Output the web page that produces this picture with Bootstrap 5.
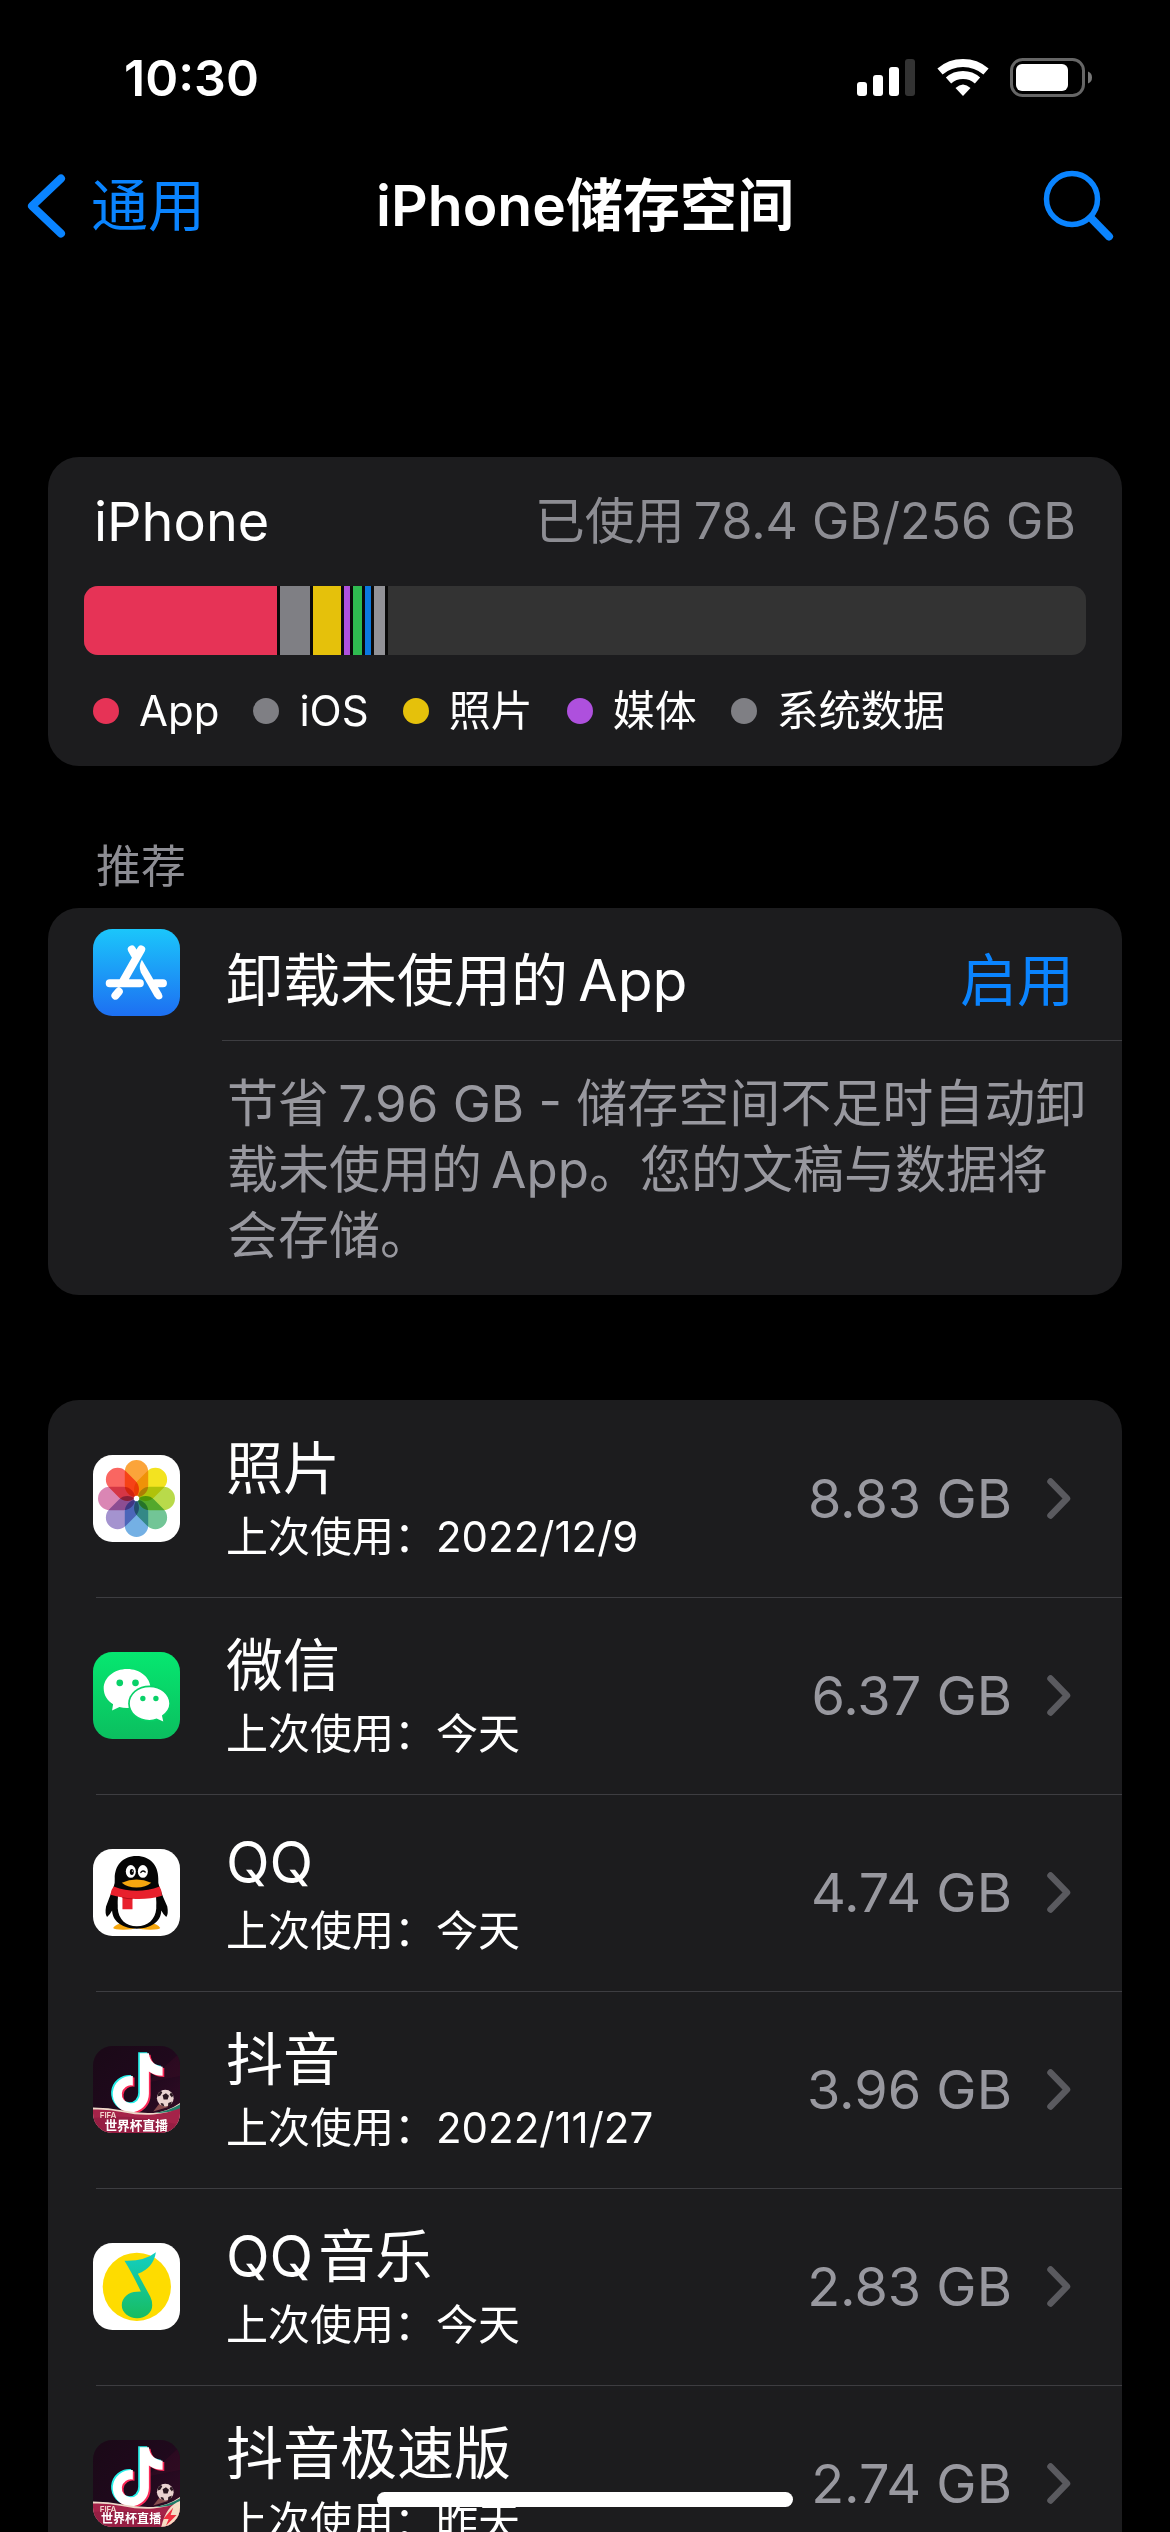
<!DOCTYPE html>
<html lang="zh-CN" data-bs-theme="dark">
<head>
<meta charset="utf-8">
<meta name="viewport" content="width=device-width, initial-scale=1">
<title>iPhone储存空间</title>
<link href="https://cdn.jsdelivr.net/npm/bootstrap@5.3.0/dist/css/bootstrap.min.css" rel="stylesheet">
<style>
  body { background: #000; color: #fff; font-family: Inter, "Noto Sans CJK SC", sans-serif; height: 100vh; overflow: hidden; }
  svg { display: block; flex: none; }
  a { color: inherit; text-decoration: none; }
  .txt-lg { font-size: 57px; line-height: 76px; }
  .txt-num { font-size: 54px; line-height: 76px; }
  .txt-md { font-size: 51px; line-height: 66px; }
  .txt-sm { font-size: 42px; line-height: 60px; }
  .tint { color: #0a84ff; }
  .dim { color: #98989f; }
  .status-bar { height: 156px; padding: 0 78px 0 124px; }
  .clock { font-size: 50px; font-weight: 600; }
  .top-nav { height: 100px; padding: 0 27px; }
  .search-btn { margin-right: 28px; }
  .screen { padding: 201px 48px 0; }
  .panel { background: #1c1c1e; border-radius: 31px; }
  .usage-head { height: 129px; padding: 0 46px; }
  .usage-total { font-size: 50px; color: #8d8d93; }
  .usage-bar { height: 69px; margin: 0 36px; border-radius: 14px; overflow: hidden; background: #333; }
  .usage-part { border-right: 3px solid #0a0a0a; }
  .legend-row { height: 111px; padding: 0 45px; gap: 34px; }
  .legend-row li { gap: 20px; }
  .dot { width: 26px; height: 26px; border-radius: 50%; }
  .c-app { background: #e63356; } .c-ios { background: #7f7f84; } .c-photo { background: #e5c10b; }
  .c-media { background: #ae50dd; } .c-green { background: #2fbb50; } .c-blue { background: #0b78e0; } .c-sys { background: #929297; }
  .section-title { font-size: 45px; line-height: 68px; padding: 67px 48px 7px; color: #8d8d93; }
  .tip { padding-left: 45px; }
  .tip-icon { margin-top: 21px; }
  .tip-main { margin-left: 42px; }
  .tip-head { height: 133px; padding: 14px 48px 0 4px; border-bottom: 1px solid #3d3d41; }
  .tip-text { padding: 30px 32px 26px 5px; }
  .app-list { margin-top: 105px; }
  .app-row { height: 197px; padding: 0 51px 0 45px; }
  .app-row + .app-row { background: linear-gradient(#3d3d41, #3d3d41) 48px 0 / 100% 1px no-repeat; }
  .app-text { margin-left: 46px; }
  .app-size { margin-right: 35px; }
  .home-bar { width: 416px; height: 15px; bottom: 25px; border-radius: 8px; background: #fff; z-index: 5; }
</style>
</head>
<body>
<svg width="0" height="0" class="position-absolute" aria-hidden="true">
  <defs>
    <linearGradient id="gStore" x1="0" y1="0" x2="0" y2="1"><stop offset="0" stop-color="#1bc6fb"/><stop offset="1" stop-color="#1d6ff2"/></linearGradient>
    <linearGradient id="gChat" x1="0" y1="0" x2="0" y2="1"><stop offset="0" stop-color="#06e770"/><stop offset="1" stop-color="#0bbf5f"/></linearGradient>
    <linearGradient id="gNote" x1="0" y1="0" x2="0" y2="1"><stop offset="0" stop-color="#12cfc4"/><stop offset="1" stop-color="#18bc60"/></linearGradient>
    <linearGradient id="gNight" x1="0" y1="0" x2="1" y2="1"><stop offset="0" stop-color="#1a0917"/><stop offset=".5" stop-color="#1f091c"/><stop offset="1" stop-color="#360c28"/></linearGradient>
    <clipPath id="tile"><rect width="260" height="260" rx="58"/></clipPath>
    <path id="petal" d="M-35 -80a35 35 0 0 1 70 0v41a35 35 0 0 1 -35 35a35 35 0 0 1 -35 -35z"/>
    <path id="tune" d="M140 22h27C169 45 185 60 208 62v27C192 89 178 84 167 76V143A54 54 0 1 1 119 90V118A27 27 0 1 0 140 143Z"/>
    <g id="cup">
      <rect width="260" height="260" fill="url(#gNight)"/>
      <path d="M160 110L260 20V90Z" fill="#3b0c25" opacity=".4"/>
      <use href="#tune" x="-5" y="-3" fill="#25f0ea"/>
      <use href="#tune" x="5" y="4" fill="#fb2a58"/>
      <use href="#tune" fill="#fff"/>
      <path d="M180 196L208 160L225 182Z" fill="#b06a63" opacity=".7"/>
      <circle cx="216" cy="156" r="25" fill="#ead3d1"/>
      <path d="M208 147l10-6 9 8-4 11-12 0zM195 142l8-8 4 5-6 10-8 2zM233 138l7 9-4 7-7-8zM202 170l8 2 3 8-8-2zM225 170l11-4-4 10-8 4z" fill="#2a1720"/>
      <path d="M0 184Q45 184 90 193T180 200Q225 195 260 170V260H0Z" fill="#efd8c9"/>
      <path d="M185 200Q230 193 260 174V190Q225 200 185 200Z" fill="#1f7c68"/>
      <path d="M0 190Q45 188 90 198T180 205Q225 200 260 186V260H0Z" fill="#a52349"/>
      <path d="M0 215Q100 200 260 235V260H0Z" fill="#8c1a40" opacity=".6"/>
      <text x="20" y="214" font-size="24" font-weight="600" fill="#f3d9cf" font-family="Inter, sans-serif">FIFA</text>
    </g>
    <symbol id="chev" viewBox="0 0 24 41"><path d="M3.500 3.500L20 20.500L3.500 37.500" fill="none" stroke="#5a5a5f" stroke-width="6.500" stroke-linecap="round" stroke-linejoin="round"/></symbol>
  </defs>
</svg>

<header>
  <div class="status-bar d-flex align-items-center justify-content-between">
    <div class="clock">10:30</div>
    <div class="d-flex align-items-center" aria-hidden="true">
      <svg width="235" height="40" viewBox="0 0 235 40">
        <g fill="#fff"><rect y="24" width="10" height="14" rx="3"/><rect x="16" y="17" width="10" height="21" rx="3"/><rect x="32" y="9" width="10" height="29" rx="3"/></g>
        <rect x="48" y="1" width="10" height="37" rx="3" fill="#333"/>
        <g fill="none" stroke="#fff" stroke-width="8"><path d="M83 13.500A35.500 35.500 0 0 1 129 13.500"/><path d="M91.500 22.500A22 22 0 0 1 120.500 22.500"/></g>
        <path d="M106 38l-7.500-8Q106 23 113.500 30Z" fill="#fff"/>
        <rect x="154.500" y="1.500" width="72" height="36" rx="11" fill="none" stroke="#666" stroke-width="3"/>
        <rect x="159" y="6" width="52" height="27" rx="6" fill="#fff"/>
        <path d="M231 13.500q4 1.500 4 6t-4 6z" fill="#777"/>
      </svg>
    </div>
  </div>
  <nav class="top-nav d-flex align-items-center">
    <a href="#" class="tint d-flex align-items-center flex-fill w-25 txt-lg">
      <svg width="40" height="64" viewBox="0 0 40 64" aria-hidden="true"><path d="M34 4.500L5 32L34 59.500" fill="none" stroke="#0a84ff" stroke-width="8" stroke-linecap="round" stroke-linejoin="round"/></svg>
      <span class="ms-4">通用</span>
    </a>
    <h1 class="txt-lg fw-semibold m-0 text-nowrap">iPhone储存空间</h1>
    <div class="d-flex justify-content-end flex-fill w-25">
      <button type="button" class="search-btn btn p-0 border-0" aria-label="搜索">
        <svg width="72" height="72" viewBox="0 0 72 72"><g fill="none" stroke="#0a84ff" stroke-linecap="round"><circle cx="29" cy="29" r="25.500" stroke-width="5.500"/><path d="M48 48L66 66.500" stroke-width="8"/></g></svg>
      </button>
    </div>
  </nav>
</header>

<main class="screen">
  <section class="panel">
    <div class="usage-head d-flex align-items-center justify-content-between">
      <span class="txt-num">iPhone</span>
      <span class="usage-total">已使用&thinsp;78.4 GB/256 GB</span>
    </div>
    <div class="usage-bar d-flex">
      <div class="usage-part c-app" style="width:19.6%"></div>
      <div class="usage-part c-ios" style="width:3.3%"></div>
      <div class="usage-part c-photo" style="width:3%"></div>
      <div class="usage-part c-media" style="width:.9%"></div>
      <div class="usage-part c-green" style="width:1.2%"></div>
      <div class="usage-part c-blue" style="width:.9%"></div>
      <div class="usage-part c-sys" style="width:1.4%"></div>
    </div>
    <ul class="legend-row list-unstyled d-flex align-items-center m-0 txt-sm">
      <li class="d-flex align-items-center"><span class="dot c-app"></span>App</li>
      <li class="d-flex align-items-center"><span class="dot c-ios"></span>iOS</li>
      <li class="d-flex align-items-center"><span class="dot c-photo"></span>照片</li>
      <li class="d-flex align-items-center"><span class="dot c-media"></span>媒体</li>
      <li class="d-flex align-items-center"><span class="dot c-ios"></span>系统数据</li>
    </ul>
  </section>

  <h2 class="section-title fw-normal m-0">推荐</h2>
  <section class="panel tip d-flex">
    <svg class="tip-icon" width="87" height="87" viewBox="0 0 260 260" aria-hidden="true">
      <rect width="260" height="260" rx="58" fill="url(#gStore)"/>
      <g stroke="#fff" stroke-width="24" stroke-linecap="round" fill="none">
        <path d="M116 61L128 82M144 61L90 156M50 162H140M186 162H209M77 187L67 199"/>
      </g>
      <path d="M146 92L205 193Q212 207 200 210Q190 212 184 202L143 130Q135 112 146 92Z" fill="#fff"/>
    </svg>
    <div class="tip-main flex-grow-1">
      <div class="tip-head d-flex align-items-center justify-content-between">
        <span class="txt-lg">卸载未使用的&thinsp;App</span>
        <button type="button" class="btn p-0 border-0 tint txt-lg">启用</button>
      </div>
      <p class="tip-text txt-md dim m-0">节省&thinsp;7.96 GB - 储存空间不足时自动卸载未使用的&thinsp;App。您的文稿与数据将会存储。</p>
    </div>
  </section>

  <section class="panel app-list">
    <a href="#" class="app-row d-flex align-items-center">
      <svg width="87" height="87" viewBox="0 0 260 260" aria-hidden="true">
        <rect width="260" height="260" rx="58" fill="#fff"/>
        <g transform="translate(130 130)" style="isolation:isolate">
          <g style="mix-blend-mode:multiply"><use href="#petal" fill="#fba43a"/></g>
          <g style="mix-blend-mode:multiply" transform="rotate(45)"><use href="#petal" fill="#f3e320"/></g>
          <g style="mix-blend-mode:multiply" transform="rotate(90)"><use href="#petal" fill="#b9da4a"/></g>
          <g style="mix-blend-mode:multiply" transform="rotate(135)"><use href="#petal" fill="#72c596"/></g>
          <g style="mix-blend-mode:multiply" transform="rotate(180)"><use href="#petal" fill="#74b0e4"/></g>
          <g style="mix-blend-mode:multiply" transform="rotate(225)"><use href="#petal" fill="#a493cf"/></g>
          <g style="mix-blend-mode:multiply" transform="rotate(270)"><use href="#petal" fill="#da86b4"/></g>
          <g style="mix-blend-mode:multiply" transform="rotate(315)"><use href="#petal" fill="#fa6661"/></g>
          <circle r="8" fill="#fff"/>
        </g>
      </svg>
      <div class="app-text flex-grow-1"><div class="txt-lg">照片</div><div class="txt-sm">上次使用：2022/12/9</div></div>
      <span class="app-size txt-num dim">8.83 GB</span>
      <svg width="24" height="41" aria-hidden="true"><use href="#chev"/></svg>
    </a>
    <a href="#" class="app-row d-flex align-items-center">
      <svg width="87" height="87" viewBox="0 0 260 260" aria-hidden="true">
        <rect width="260" height="260" rx="58" fill="url(#gChat)"/>
        <path d="M102 51C141 51 172 77 172 109S141 167 102 167Q90 167 79 164L57 175L60 156C43 146 32 128 32 109C32 77 63 51 102 51Z" fill="#fff"/>
        <ellipse cx="169" cy="154" rx="64" ry="54" fill="#08d168"/>
        <path d="M169 105C202 105 228 127 228 154Q228 174 206 190L210 208L190 199Q180 203 169 203C135 203 110 181 110 154S135 105 169 105Z" fill="#fff"/>
        <g fill="#08d168"><circle cx="80" cy="92" r="10"/><circle cx="127" cy="92" r="10"/><circle cx="149" cy="139" r="8"/><circle cx="188" cy="139" r="8"/></g>
      </svg>
      <div class="app-text flex-grow-1"><div class="txt-lg">微信</div><div class="txt-sm">上次使用：今天</div></div>
      <span class="app-size txt-num dim">6.37 GB</span>
      <svg width="24" height="41" aria-hidden="true"><use href="#chev"/></svg>
    </a>
    <a href="#" class="app-row d-flex align-items-center">
      <svg width="87" height="87" viewBox="0 0 260 260" aria-hidden="true">
        <rect width="260" height="260" rx="58" fill="#fff"/>
        <path d="M60 236Q70 220 100 222L128 236Q120 241 90 241Q64 241 60 236ZM201 236Q192 220 162 222L134 236Q142 241 172 241Q198 241 201 236Z" fill="#f6a70f"/>
        <path d="M130 21C172 21 195 50 195 88Q194 100 198 112Q208 142 222 172Q226 195 219 203Q211 198 204 184C203 220 170 238 131 238S59 220 57 184Q50 198 42 203Q35 195 39 172Q50 142 62 112Q66 100 65 88C65 50 88 21 130 21Z" fill="#050505"/>
        <path d="M75 135H188Q190 160 189 178C187 210 164 231 131 231S76 210 74 178Q73 155 75 135Z" fill="#fff"/>
        <path d="M62 112Q130 138 199 112Q206 124 206 140Q165 152 118 149V180H88V145Q70 142 52 137Q53 122 62 112Z" fill="#e8202c"/>
        <path d="M88 145Q102 149 118 149" fill="none" stroke="#b30f1c" stroke-width="3"/>
        <ellipse cx="113" cy="67" rx="15" ry="19" fill="#fff"/><ellipse cx="149" cy="67" rx="15" ry="19" fill="#fff"/>
        <ellipse cx="116" cy="69" rx="6" ry="9" fill="#050505"/><circle cx="118" cy="66" r="2" fill="#fff"/>
        <path d="M143 70Q149 62 156 69" fill="none" stroke="#050505" stroke-width="4" stroke-linecap="round"/>
        <path d="M86 101Q130 82 174 101Q158 115 130 115T86 101Z" fill="#f6a70f"/>
      </svg>
      <div class="app-text flex-grow-1"><div class="txt-lg">QQ</div><div class="txt-sm">上次使用：今天</div></div>
      <span class="app-size txt-num dim">4.74 GB</span>
      <svg width="24" height="41" aria-hidden="true"><use href="#chev"/></svg>
    </a>
    <a href="#" class="app-row d-flex align-items-center">
      <svg width="87" height="87" viewBox="0 0 260 260" aria-hidden="true">
        <g clip-path="url(#tile)"><use href="#cup"/>
        <text x="34" y="250" font-size="38" font-weight="700" fill="#fff" font-family="Noto Sans CJK SC, sans-serif">世界杯直播</text></g>
      </svg>
      <div class="app-text flex-grow-1"><div class="txt-lg">抖音</div><div class="txt-sm">上次使用：2022/11/27</div></div>
      <span class="app-size txt-num dim">3.96 GB</span>
      <svg width="24" height="41" aria-hidden="true"><use href="#chev"/></svg>
    </a>
    <a href="#" class="app-row d-flex align-items-center">
      <svg width="87" height="87" viewBox="0 0 260 260" aria-hidden="true">
        <rect width="260" height="260" rx="58" fill="#fff"/>
        <circle cx="131" cy="131" r="102" fill="#fedc00"/>
        <path d="M94 53Q155 55 188 28Q180 76 134 92L171 160Q177 172 177 186C177 208 157 225 132 225S86 208 86 186S106 146 131 146Q138 145 143 145Q118 92 94 53Z" fill="url(#gNote)"/>
      </svg>
      <div class="app-text flex-grow-1"><div class="txt-lg">QQ&hairsp;音乐</div><div class="txt-sm">上次使用：今天</div></div>
      <span class="app-size txt-num dim">2.83 GB</span>
      <svg width="24" height="41" aria-hidden="true"><use href="#chev"/></svg>
    </a>
    <a href="#" class="app-row d-flex align-items-center">
      <svg width="87" height="87" viewBox="0 0 260 260" aria-hidden="true">
        <g clip-path="url(#tile)"><use href="#cup"/>
        <path d="M260 182Q218 196 204 260H260Z" fill="#f6dcc4"/>
        <path d="M240 202L210 236H226L218 256L250 224H232Z" fill="#f0303f"/>
        <text x="24" y="249" font-size="36" font-weight="700" fill="#fff" font-family="Noto Sans CJK SC, sans-serif">世界杯直播</text></g>
      </svg>
      <div class="app-text flex-grow-1"><div class="txt-lg">抖音极速版</div><div class="txt-sm">上次使用：昨天</div></div>
      <span class="app-size txt-num dim">2.74 GB</span>
      <svg width="24" height="41" aria-hidden="true"><use href="#chev"/></svg>
    </a>
  </section>
</main>
<div class="home-bar position-fixed start-50 translate-middle-x"></div>
<script src="https://cdn.jsdelivr.net/npm/bootstrap@5.3.0/dist/js/bootstrap.bundle.min.js"></script>
</body>
</html>
